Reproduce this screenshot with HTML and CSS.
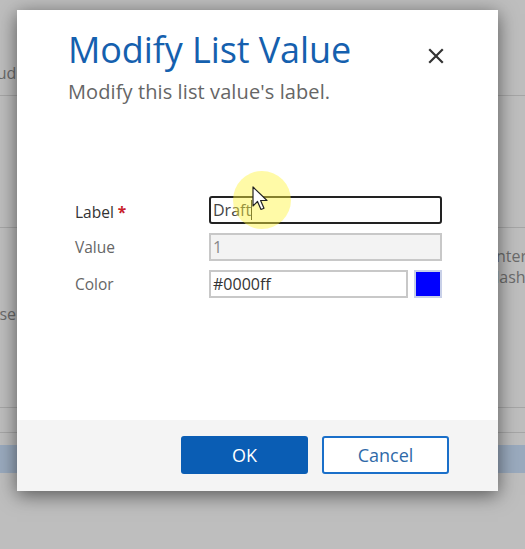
FILE: index.html
```html
<!DOCTYPE html>
<html lang="en">
<head>
<meta charset="utf-8">
<title>Modify List Value</title>
<link rel="stylesheet" href="styles.css">
</head>
<body>
<div class="page">
  <div class="bg-row bg-row-a"><span class="bg-text">Cloud</span></div>
  <div class="bg-row bg-row-b"></div>
  <div class="bg-row bg-row-c">
    <span class="bg-text bg-left">Purpose</span>
    <span class="bg-text bg-right">Enter<br>Flash</span>
  </div>
  <div class="bg-row bg-row-d"></div>
  <div class="bg-band"></div>
</div>

<div class="dialog">
  <div class="dialog-body">
    <div class="dialog-head">
      <div class="head-text">
        <h1 class="title">Modify List Value</h1>
        <p class="subtitle">Modify this list value's label.</p>
      </div>
      <button class="close" aria-label="Close">
        <svg width="16" height="16" viewBox="0 0 16 16"><path d="M2 2 L14 14 M14 2 L2 14" stroke="#333" stroke-width="2.2" stroke-linecap="square"/></svg>
      </button>
    </div>
    <div class="form">
      <div class="lbl lbl-main">Label <span class="req">*</span></div>
      <div class="field field-focus">Draft<span class="caret"></span></div>
      <div class="lbl">Value</div>
      <div class="field field-disabled">1</div>
      <div class="lbl">Color</div>
      <div class="color-row">
        <div class="field field-color">#0000ff</div>
        <div class="swatch"></div>
      </div>
    </div>
  </div>
  <div class="dialog-foot">
    <button class="btn btn-primary">OK</button>
    <button class="btn btn-secondary">Cancel</button>
  </div>
</div>

<div class="highlight"></div>
<svg class="pointer" width="18" height="26" viewBox="0 0 18 26">
  <path d="M1 1 L1 20 L5.5 15.5 L9 23.5 L12 22.2 L8.6 14.5 L15 14.5 Z" fill="#fff" stroke="#222" stroke-width="1.2" stroke-linejoin="round"/>
</svg>
</body>
</html>
```

FILE: styles.css
```css
* { box-sizing: border-box; }
html, body { margin: 0; padding: 0; }
body {
  width: 525px;
  height: 549px;
  overflow: hidden;
  background: #bebebe;
  font-family: "Open Sans", "Noto Sans", sans-serif;
  position: relative;
}

/* dimmed background page */
.page {
  display: flex;
  flex-direction: column;
}
.bg-row {
  border-bottom: 1px solid #a6a6a6;
  display: flex;
  justify-content: space-between;
}
.bg-text {
  color: #6b6b6b;
  font-size: 16px;
  line-height: 20px;
}
.bg-row-a {
  height: 96px;
  align-items: flex-start;
  padding-top: 63px;
}
.bg-row-a .bg-text { margin-left: -27px; }
.bg-row-b { height: 132px; }
.bg-row-c {
  height: 180px;
  align-items: flex-start;
}
.bg-left { margin-left: -46px; margin-top: 76px; }
.bg-right {
  flex: none;
  width: 38px;
  white-space: nowrap;
  margin-top: 18px;
  line-height: 21px;
}
.bg-row-d { height: 25px; }
.bg-band {
  margin-top: 12px;
  height: 28px;
  background: #9aaabe;
}

/* dialog */
.dialog {
  position: absolute;
  left: 17px;
  top: 10px;
  width: 481px;
  height: 481px;
  background: #fff;
  box-shadow: 0 4px 18px rgba(0,0,0,0.55);
  display: flex;
  flex-direction: column;
}
.dialog-body {
  flex: 1;
  padding: 18px 0 0 51px;
}
.dialog-head {
  display: flex;
  justify-content: space-between;
  align-items: flex-start;
}
.title {
  margin: 0;
  font-weight: 400;
  font-size: 36px;
  line-height: 44px;
  color: #1560ae;
  letter-spacing: -0.1px;
}
.subtitle {
  margin: 7px 0 0;
  font-size: 20px;
  line-height: 26px;
  color: #666;
  letter-spacing: 0.1px;
}
.close {
  margin: 20px 54px 0 0;
  padding: 0;
  border: 0;
  background: none;
  width: 16px;
  height: 16px;
  display: flex;
}

.form {
  margin: 91px 0 0 7px;
  display: grid;
  grid-template-columns: 134px 233px;
  grid-auto-rows: 28px;
  row-gap: 9px;
  align-items: center;
}
.lbl {
  font-size: 15.5px;
  color: #666;
  line-height: 20px;
}
.lbl-main { color: #333; margin-top: 4px; }
.req { color: #c8202a; font-weight: 700; }
.field {
  height: 28px;
  border: 2px solid #c8c8c8;
  font-size: 16px;
  line-height: 24px;
  padding: 0 2px;
  color: #333;
  display: flex;
  align-items: center;
}
.field-focus {
  border-color: #222;
  border-radius: 3px;
  color: #444;
}
.caret {
  width: 1px;
  height: 20px;
  background: #222;
}
.field-disabled {
  background: #f3f3f3;
  color: #888;
}
.color-row {
  display: flex;
  gap: 6px;
  align-items: center;
}
.field-color {
  width: 199px;
}
.swatch {
  width: 28px;
  height: 28px;
  background: #0000ff;
  border: 2px solid #c8d0e8;
}

.dialog-foot {
  height: 71px;
  background: #f4f4f4;
  display: flex;
  justify-content: flex-end;
  align-items: flex-start;
  padding: 16px 49px 0 0;
  gap: 14px;
}
.btn {
  width: 127px;
  height: 38px;
  border-radius: 3px;
  font-family: "Open Sans", "Noto Sans", sans-serif;
  font-size: 18px;
  padding: 0;
}
.btn-primary {
  background: #0a5db4;
  border: 0;
  color: #fff;
}
.btn-secondary {
  background: #fff;
  border: 2px solid #1a6fc9;
  color: #2f6aa8;
}

/* screen-recording cursor overlay */
.highlight {
  position: absolute;
  left: 233px;
  top: 171px;
  width: 58px;
  height: 58px;
  border-radius: 50%;
  background: rgba(255, 245, 60, 0.45);
}
.pointer {
  position: absolute;
  left: 252px;
  top: 186px;
}
```
